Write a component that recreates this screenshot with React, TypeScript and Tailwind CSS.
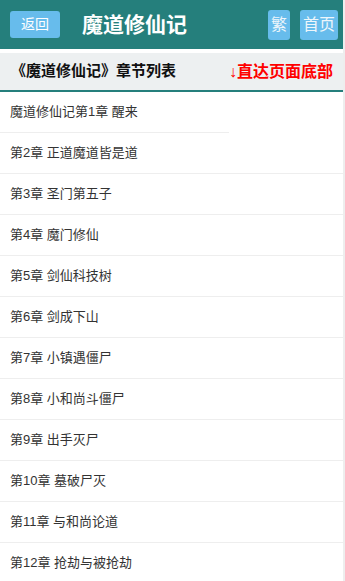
const chapters = [
  "魔道修仙记第1章 醒来",
  "第2章 正道魔道皆是道",
  "第3章 圣门第五子",
  "第4章 魔门修仙",
  "第5章 剑仙科技树",
  "第6章 剑成下山",
  "第7章 小镇遇僵尸",
  "第8章 小和尚斗僵尸",
  "第9章 出手灭尸",
  "第10章 墓破尸灭",
  "第11章 与和尚论道",
  "第12章 抢劫与被抢劫",
];

export default function App() {
  return (
    <div
      className="min-h-screen bg-[#eeeeee]"
      style={{ fontFamily: '"Liberation Sans", "Noto Sans CJK SC", sans-serif' }}
    >
      <div className="w-[343px] bg-white min-h-screen">
        {/* header */}
        <div className="h-[49px] bg-[#257f7c] flex items-center px-[10px]">
          <a className="w-[50px] h-[27px] rounded-[3px] bg-[#67bcec] text-white text-[14px] flex items-center justify-center">
            返回
          </a>
          <h1 className="ml-[22px] text-white text-[21px] font-bold leading-none">魔道修仙记</h1>
          <div className="ml-auto flex items-center gap-[10px] mr-[-5px]">
            <a className="w-[22px] h-[30px] rounded-[3px] bg-[#67bcec] text-[#eef6fb] text-[16px] flex items-center justify-center">
              繁
            </a>
            <a className="w-[38px] h-[30px] rounded-[3px] bg-[#67bcec] text-[#eef6fb] text-[16px] flex items-center justify-center">
              首页
            </a>
          </div>
        </div>

        {/* list title */}
        <div className="mt-[4px] h-[39px] bg-[#edf0f1] border-b-2 border-[#257f7c] flex items-center pl-[11px] pr-[10px]">
          <span className="text-[15px] font-bold text-[#111]">《魔道修仙记》章节列表</span>
          <a className="ml-auto text-[16px] font-bold text-[#ff0000]">↓直达页面底部</a>
        </div>

        {/* chapters */}
        <ul>
          {chapters.map((c, i) => (
            <li
              key={c}
              className={`h-[41px] flex items-center pl-[10px] text-[13px] text-[#333] border-b border-[#eeeeee] ${
                i === 0 ? "w-[229px] h-[40px]" : ""
              }`}
            >
              {c}
            </li>
          ))}
        </ul>
      </div>
    </div>
  );
}
